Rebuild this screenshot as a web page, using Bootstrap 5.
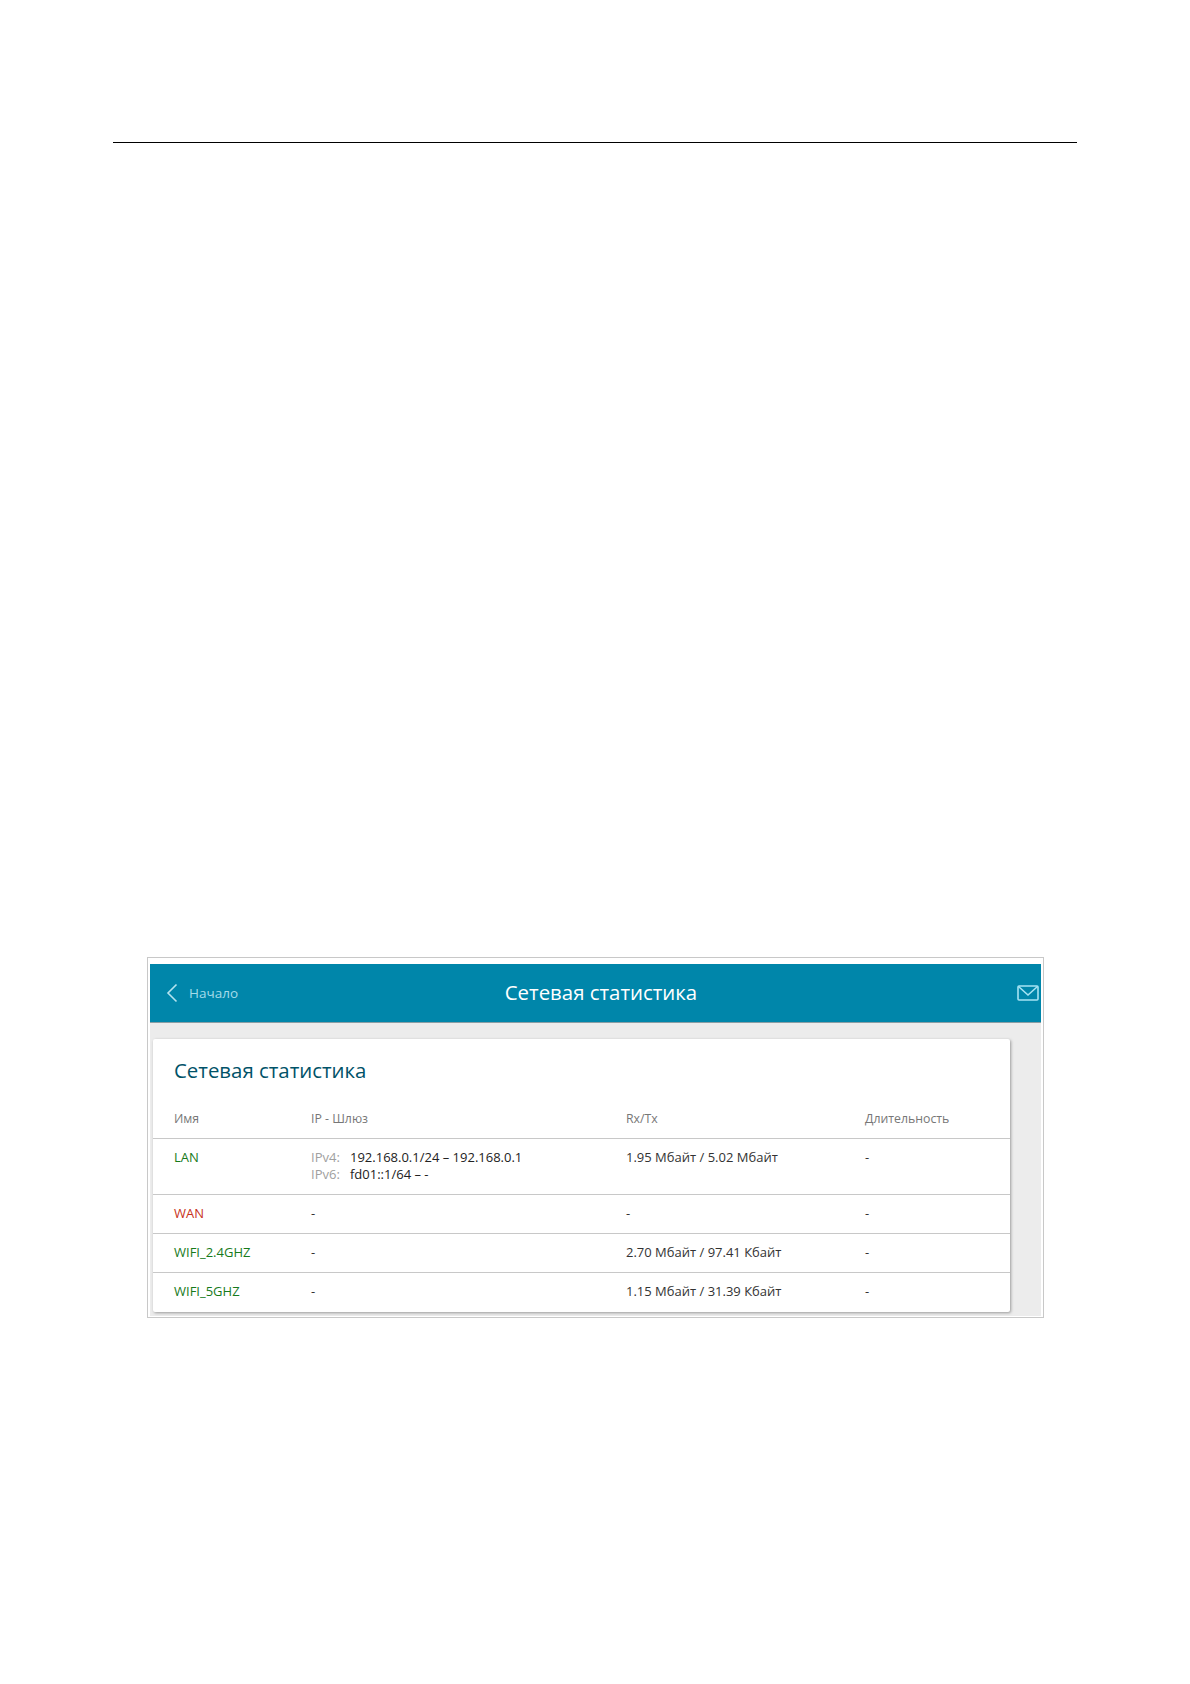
<!DOCTYPE html>
<html lang="ru">
<head>
  <meta charset="UTF-8">
  <title>Сетевая статистика</title>
  <link href="https://cdn.jsdelivr.net/npm/bootstrap@5.3.2/dist/css/bootstrap.min.css" rel="stylesheet">
  <style>
    body { background: #fff; font-family: "Open Sans", "Noto Sans", sans-serif; }
    .page-rule { height: 1px; background: #000; margin: 142px 113px 0 113px; opacity: 1; border: 0; }
    .shot { width: 897px; height: 361px; margin: 814px 0 0 147px; border: 1px solid #c8c8c8; padding: 6px 2px 0; background: #fff; }
    .shot-inner { background: #ececec; height: 352px; }
    .top-bar { height: 59px; background: #0086aa; border-bottom: 1px solid #8a9ea4; padding: 0 2px 0 16px; }
    .back-link { color: #a5dbe9; font-size: 13.5px; width: 0; white-space: nowrap; gap: 11px; }
    .top-title { color: #fff; font-size: 20.4px; margin: 0 1px 2px 20px; }
    .stat-card { width: 857px; height: 273px; margin: 16px 0 0 3px; background: #fff; border-radius: 2px; box-shadow: 1px 1px 3px rgba(0,0,0,.35); }
    .stat-card h2 { color: #005268; font-size: 20.4px; font-weight: 400; margin: 0; padding: 18px 0 0 21px; height: 58px; line-height: 27px; }
    .stat-table { table-layout: fixed; width: 100%; margin: 0; font-size: 13px; color: #333; }
    .stat-table th, .stat-table td { padding: 0; border: 0; background: none; vertical-align: top; }
    .stat-table th { font-weight: 400; color: #777; font-size: 12.3px; height: 41px; padding-top: 13px; border-bottom: 1px solid #c8c8c8; }
    .stat-table td { height: 39px; padding-top: 10px; line-height: 17px; color: #333; border-bottom: 1px solid #c8c8c8; }
    .stat-table tr.tall td { height: 56px; }
    .stat-table tr:last-child td { border-bottom: 0; }
    .stat-table .col-name { width: 158px; padding-left: 21px; }
    .stat-table .col-ip { width: 315px; }
    .stat-table .col-rate { width: 239px; }
    .st-up { color: #177a1c !important; }
    .st-down { color: #c8321a !important; }
    .ip-tag { color: #a0a0a0; display: inline-block; width: 39px; }
    .ip-val { color: #222; }
  </style>
</head>
<body>

  <hr class="page-rule">

  <div class="shot">
    <div class="shot-inner">
      <div class="top-bar d-flex align-items-center">
        <div class="back-link d-flex align-items-center">
          <svg class="flex-shrink-0" width="12" height="20" viewBox="0 0 12 20" fill="none" stroke="#b5e3ef" stroke-width="1.6"><path d="M10.5 1.5 2 10l8.500 8.500"/></svg>
          <span>Начало</span>
        </div>
        <div class="top-title flex-grow-1 text-center">Сетевая статистика</div>
        <svg class="flex-shrink-0" width="22" height="16" viewBox="0 0 22 16" fill="none" stroke="#a5e3f3" stroke-width="1.600"><rect x="1" y="1" width="20" height="14" rx="1"/><path d="M1.500 1.500 11 10l9.500-8.500"/></svg>
      </div>
      <div class="stat-card">
        <h2>Сетевая статистика</h2>
        <table class="table stat-table">
          <thead>
            <tr>
              <th class="col-name">Имя</th>
              <th class="col-ip">IP - Шлюз</th>
              <th class="col-rate">Rx/Tx</th>
              <th>Длительность</th>
            </tr>
          </thead>
          <tbody>
            <tr class="tall">
              <td class="col-name st-up">LAN</td>
              <td>
                <div><span class="ip-tag">IPv4:</span><span class="ip-val">192.168.0.1/24 – 192.168.0.1</span></div>
                <div><span class="ip-tag">IPv6:</span><span class="ip-val">fd01::1/64 – -</span></div>
              </td>
              <td>1.95 Мбайт / 5.02 Мбайт</td>
              <td>-</td>
            </tr>
            <tr>
              <td class="col-name st-down">WAN</td>
              <td>-</td>
              <td>-</td>
              <td>-</td>
            </tr>
            <tr>
              <td class="col-name st-up">WIFI_2.4GHZ</td>
              <td>-</td>
              <td>2.70 Мбайт / 97.41 Кбайт</td>
              <td>-</td>
            </tr>
            <tr>
              <td class="col-name st-up">WIFI_5GHZ</td>
              <td>-</td>
              <td>1.15 Мбайт / 31.39 Кбайт</td>
              <td>-</td>
            </tr>
          </tbody>
        </table>
      </div>
    </div>
  </div>

  <script src="https://cdn.jsdelivr.net/npm/bootstrap@5.3.2/dist/js/bootstrap.bundle.min.js"></script>
</body>
</html>
